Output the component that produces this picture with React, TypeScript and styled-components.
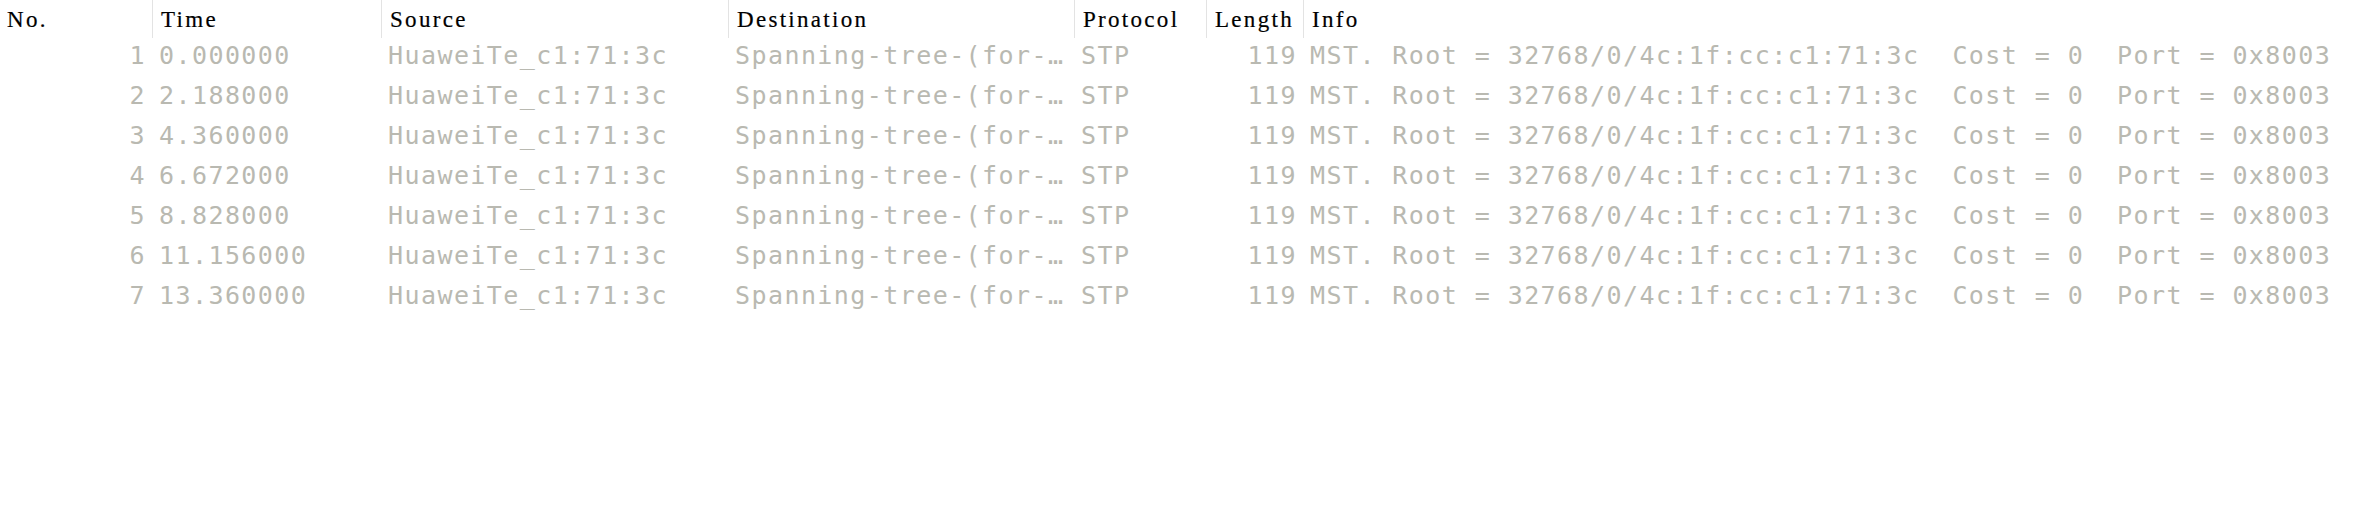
import React from "react";
import styled, { createGlobalStyle } from "styled-components";

const Global = createGlobalStyle`
  html, body { margin: 0; padding: 0; background: #ffffff; }
  body { width: 2356px; height: 528px; overflow: hidden; }
`;

const COLS = "152px 229px 347px 346px 132px 97px 1fr";

const Table = styled.div`
  display: flex;
  flex-direction: column;
  width: 2356px;
`;

const HeaderRow = styled.div`
  display: grid;
  grid-template-columns: ${COLS};
  height: 38px;
`;

const HeaderCell = styled.div<{ $first?: boolean }>`
  display: flex;
  align-items: center;
  padding-left: ${(p) => (p.$first ? "7px" : "8px")};
  border-left: ${(p) => (p.$first ? "none" : "1px solid #e3e3e3")};
  font-family: "Liberation Serif", "Noto Sans CJK SC", serif;
  font-size: 23px;
  letter-spacing: 2.3px;
  color: #000000;
  white-space: nowrap;
  overflow: hidden;
  padding-top: 1px;
  -webkit-text-stroke: 0.2px #000;
`;

const Row = styled.div`
  display: grid;
  grid-template-columns: ${COLS};
  height: 40px;
  box-sizing: border-box;
  padding-bottom: 6px;
  align-items: center;
`;

const Cell = styled.div<{ $right?: boolean }>`
  font-family: "DejaVu Sans Mono", "Liberation Mono", monospace;
  font-size: 25px;
  letter-spacing: 1.42px;
  color: #b9b9b1;
  white-space: pre;
  overflow: hidden;
  text-align: ${(p) => (p.$right ? "right" : "left")};
  padding: ${(p) => (p.$right ? "0 6px 0 0" : "0 0 0 7px")};
`;

const headers = ["No.", "Time", "Source", "Destination", "Protocol", "Length", "Info"];

const packets = [
  { no: 1, time: "0.000000" },
  { no: 2, time: "2.188000" },
  { no: 3, time: "4.360000" },
  { no: 4, time: "6.672000" },
  { no: 5, time: "8.828000" },
  { no: 6, time: "11.156000" },
  { no: 7, time: "13.360000" },
];

export default function App() {
  return (
    <>
      <Global />
      <Table>
        <HeaderRow>
          {headers.map((h, i) => (
            <HeaderCell key={h} $first={i === 0}>
              {h}
            </HeaderCell>
          ))}
        </HeaderRow>
        {packets.map((p) => (
          <Row key={p.no}>
            <Cell $right>{p.no}</Cell>
            <Cell>{p.time}</Cell>
            <Cell>HuaweiTe_c1:71:3c</Cell>
            <Cell>Spanning-tree-(for-…</Cell>
            <Cell>STP</Cell>
            <Cell $right>119</Cell>
            <Cell>{"MST. Root = 32768/0/4c:1f:cc:c1:71:3c  Cost = 0  Port = 0x8003"}</Cell>
          </Row>
        ))}
      </Table>
    </>
  );
}
